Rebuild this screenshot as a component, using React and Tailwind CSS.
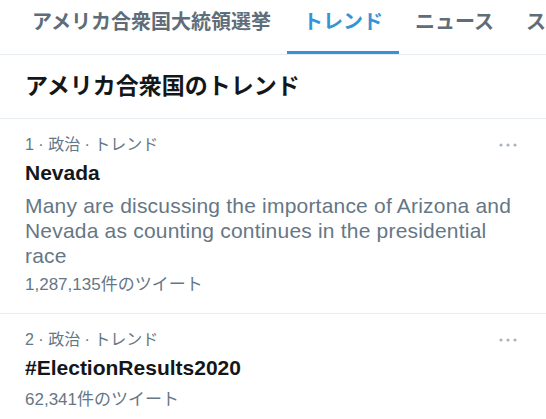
import React from 'react';

const tabs = [
  { label: 'アメリカ合衆国大統領選挙', active: false },
  { label: 'トレンド', active: true },
  { label: 'ニュース', active: false },
  { label: 'スポーツ', active: false },
];

const trends = [
  {
    rank: 1,
    name: 'Nevada',
    desc: 'Many are discussing the importance of Arizona and Nevada as counting continues in the presidential race',
    count: '1,287,135件のツイート',
  },
  {
    rank: 2,
    name: '#ElectionResults2020',
    count: '62,341件のツイート',
  },
];

const MoreDots = () => (
  <svg width="18" height="4" viewBox="0 0 18 4" className="text-[#a9b4bd]">
    <circle cx="2" cy="2" r="1.6" fill="currentColor" />
    <circle cx="9" cy="2" r="1.6" fill="currentColor" />
    <circle cx="16" cy="2" r="1.6" fill="currentColor" />
  </svg>
);

const TrendItem = ({ rank, name, desc, count }) => (
  <div className="px-[25px] pt-[16px] pb-[18px] border-b border-[#e6ecf0]">
    <div className="flex items-center justify-between h-[20px] text-[16px] leading-[20px] text-[#657786]">
      <span>{rank} · 政治 · トレンド</span>
      <span className="mr-[4px] flex"><MoreDots /></span>
    </div>
    <div className="mt-[5px] text-[21px] leading-[26px] font-bold text-[#14171a]">{name}</div>
    {desc && (
      <p className="mt-[7px] text-[21px] leading-[25px] tracking-[0.2px] text-[#657786]">{desc}</p>
    )}
    <div className={`${desc ? 'mt-[7px]' : 'mt-[9px]'} text-[17px] leading-[20px] text-[#657786]`}>{count}</div>
  </div>
);

export default function App() {
  return (
    <div
      className="w-[546px] h-[419px] overflow-hidden bg-white"
      style={{ fontFamily: '"Liberation Sans", "Noto Sans CJK JP", sans-serif' }}
    >
      {/* タブ */}
      <div className="flex h-[55px] pl-[16px] border-b border-[#e6ecf0] whitespace-nowrap">
        {tabs.map((t) => (
          <div
            key={t.label}
            className={`shrink-0 px-4 flex items-center pb-[8px] border-b-[3px] text-[20px] font-bold ${
              t.active ? 'border-[#3594d6] text-[#3594d6]' : 'border-transparent text-[#5f6d79]'
            }`}
          >
            {t.label}
          </div>
        ))}
      </div>

      {/* 見出し */}
      <div className="h-[64px] px-[25px] flex items-center border-b border-[#e6ecf0]">
        <h2 className="text-[23px] font-bold text-[#14171a]">アメリカ合衆国のトレンド</h2>
      </div>

      {trends.map((t) => (
        <TrendItem key={t.rank} {...t} />
      ))}
    </div>
  );
}
